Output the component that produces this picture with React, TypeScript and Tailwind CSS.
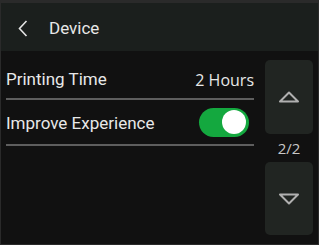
import { useState } from 'react';

// Printer settings screen: "Device" page 2 of 2.
export default function App() {
  const [improve, setImprove] = useState(true);

  return (
    <div
      className="flex h-[245px] w-[319px] flex-col overflow-hidden border border-[#2a2a2a] border-t-[3px] bg-[#111111] text-[#e8e8e8]"
      style={{ fontFamily: 'Roboto, "Liberation Sans", sans-serif' }}
    >
      <header className="flex h-[48px] shrink-0 items-center bg-[#1b1f1d] pt-[3px]">
        <button type="button" aria-label="Back" className="ml-[17px] flex h-[17px] w-[10px] items-center justify-center text-[#e4e4e4]">
          <svg width="10" height="17" viewBox="0 0 10 17" fill="none" stroke="currentColor" strokeWidth="1.6" aria-hidden>
            <path d="M8.5 1L1.5 8.5l7 7.5" />
          </svg>
        </button>
        <h1 className="ml-[21px] text-[17px] leading-none">Device</h1>
      </header>

      <div className="flex flex-1">
        <div className="flex flex-1 flex-col pl-[5px] pr-[11px]">
          <div className="flex h-[49px] items-center justify-between border-b-2 border-[#5e5e5e] pt-[11px]">
            <span className="text-[17px]">Printing Time</span>
            <span className="text-[16px]" style={{ fontFamily: '"Open Sans", sans-serif' }}>
              2 Hours
            </span>
          </div>
          <div className="flex h-[46px] items-center justify-between border-b-2 border-[#5e5e5e]">
            <span className="pt-[4px] text-[17px]">Improve Experience</span>
            <button
              type="button"
              role="switch"
              aria-checked={improve}
              onClick={() => setImprove(!improve)}
              className={
                'mr-[5px] flex h-[29px] w-[50px] items-center rounded-full px-[3px] ' +
                (improve ? 'justify-end bg-[#14a83f]' : 'justify-start bg-[#555555]')
              }
            >
              <span className="h-[24px] w-[24px] rounded-full bg-white" />
            </button>
          </div>
        </div>

        <div className="flex w-[53px] flex-col items-center pr-[5px] pt-[9px]">
          <button type="button" aria-label="Previous page" className="flex h-[74px] w-[48px] shrink-0 items-center justify-center rounded-[5px] bg-[#212522]">
            <svg width="22" height="12" viewBox="0 0 22 12" fill="none" stroke="#b0b0b0" strokeWidth="2" strokeLinejoin="round" aria-hidden>
              <path d="M11 1.5L2 10.5h18z" />
            </svg>
          </button>
          <span className="flex h-[28px] shrink-0 items-center text-[15px] text-[#c8c8c8]" style={{ fontFamily: '"Open Sans", sans-serif' }}>
            2/2
          </span>
          <button type="button" aria-label="Next page" className="flex h-[73px] w-[48px] shrink-0 items-center justify-center rounded-[5px] bg-[#212522]">
            <svg width="22" height="12" viewBox="0 0 22 12" fill="none" stroke="#b0b0b0" strokeWidth="2" strokeLinejoin="round" aria-hidden>
              <path d="M11 10.5L2 1.5h18z" />
            </svg>
          </button>
        </div>
      </div>
    </div>
  );
}
